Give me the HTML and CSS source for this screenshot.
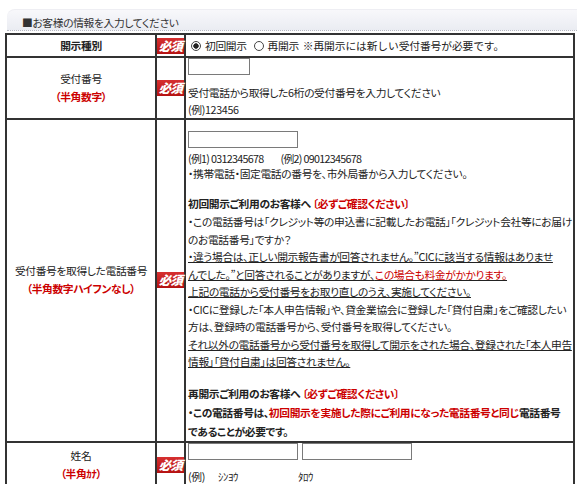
FILE: index.html
```html
<!DOCTYPE html>
<html lang="ja">
<head>
<meta charset="utf-8">
<title>お客様の情報</title>
<link rel="stylesheet" href="styles.css">
</head>
<body>
<div class="page">
  <div class="section-title">■お客様の情報を入力してください</div>
  <div class="form">
    <div class="cell label strong">開示種別</div>
    <div class="cell req"><span class="badge">必須</span></div>
    <div class="cell field field-r1">
      <label class="radio first"><input type="radio" name="kind" checked>初回開示</label><label class="radio"><input type="radio" name="kind">再開示</label><span class="memo">※再開示には新しい受付番号が必要です。</span>
    </div>

    <div class="cell label">受付番号<span class="note">（半角数字）</span></div>
    <div class="cell req"><span class="badge">必須</span></div>
    <div class="cell field">
      <input type="text" class="in-s">
      <div class="line first-line">受付電話から取得した6桁の受付番号を入力してください</div>
      <div class="line">(例)123456</div>
    </div>

    <div class="cell label">受付番号を取得した電話番号<span class="note">（半角数字ハイフンなし）</span></div>
    <div class="cell req"><span class="badge">必須</span></div>
    <div class="cell field">
      <input type="text" class="in-m top-gap">
      <div class="ex first-ex">(例1) 0312345678<span class="sp"></span>(例2) 09012345678</div>
      <div class="ex">・携帯電話・固定電話の番号を、市外局番から入力してください。</div>
      <div class="head">初回開示ご利用のお客様へ <span class="red">〔必ずご確認ください〕</span></div>
      <div class="body">・この電話番号は「クレジット等の申込書に記載したお電話」「クレジット会社等にお届け<br>のお電話番号」ですか？<br><span class="u">・違う場合は、正しい開示報告書が回答されません。”CICに該当する情報はありませ<br>んでした。”と回答されることがありますが、<span class="red">この場合も料金がかかります。</span><br>上記の電話から受付番号をお取り直しのうえ、実施してください。</span><br>・CICに登録した「本人申告情報」や、貸金業協会に登録した「貸付自粛」をご確認したい<br>方は、登録時の電話番号から、受付番号を取得してください。<br><span class="u">それ以外の電話番号から受付番号を取得して開示をされた場合、登録された「本人申告<br>情報」「貸付自粛」は回答されません。</span></div>
      <div class="head">再開示ご利用のお客様へ <span class="red">〔必ずご確認ください〕</span></div>
      <div class="body2">・この電話番号は、<span class="red">初回開示を実施した際にご利用になった電話番号と同じ</span>電話番号<br>であることが必要です。</div>
    </div>

    <div class="cell label">姓名<span class="note">（半角ｶﾅ）</span></div>
    <div class="cell req"><span class="badge">必須</span></div>
    <div class="cell field">
      <div class="name-inputs"><input type="text" class="in-m"><input type="text" class="in-m"></div>
      <div class="ex-name"><span class="ex-l">(例)</span><span class="ex-sei">ｼﾝﾖｳ</span><span>ﾀﾛｳ</span></div>
    </div>
  </div>
</div>
</body>
</html>
```

FILE: styles.css
```css
* { box-sizing: border-box; }
html, body { margin: 0; background: #fff; }
body {
  font-family: "Noto Sans CJK JP", "Noto Sans", sans-serif;
  font-size: 10.75px;
  color: #222;
  font-feature-settings: "palt";
  letter-spacing: -0.35px;
}
.page { padding-top: 9px; }

.section-title {
  margin-left: 7px;
  margin-bottom: 2px;
  height: 22px;
  padding: 4px 0 0 15px;
  line-height: 17px;
  color: #333;
  background: linear-gradient(#f8f8fb, #eaecf2);
  border-top-left-radius: 8px;
  border-top: 1px solid #eeeef3;
  border-bottom: 1px dotted #b5b7c0;
}

.form {
  margin-left: 5px;
  width: 570px;
  display: grid;
  grid-template-columns: 150px 29px 389px;
  border-top: 2px solid #333;
  border-left: 2px solid #333;
}
.cell {
  border-right: 2px solid #333;
  border-bottom: 2px solid #333;
  min-width: 0;
}

.label {
  display: flex;
  flex-direction: column;
  align-items: center;
  justify-content: center;
  text-align: center;
  line-height: 18px;
}
.label.strong { font-weight: bold; }
.note { color: #cc0000; font-weight: bold; }
.red { color: #cc0000; }

.req { display: flex; align-items: center; justify-content: center; }
.badge {
  display: block;
  width: 27px;
  height: 16px;
  line-height: 16px;
  background: linear-gradient(#d63030, #b51212);
  color: #fff;
  font-weight: 900;
  font-style: italic;
  font-size: 12.5px;
  letter-spacing: -0.8px;
  text-align: center;
  font-feature-settings: normal;
}

.field {
  padding: 0 0 0 2px;
  white-space: nowrap;
  overflow: hidden;
}
.field-r1 { display: flex; align-items: center; height: 23px; line-height: 21px; }

.radio { display: inline-flex; align-items: center; margin-right: 7px; }
.radio.first { margin-left: 3px; }
.radio input {
  appearance: none;
  -webkit-appearance: none;
  width: 10px;
  height: 10px;
  margin: 0 4px 0 0;
  border: 1px solid #444;
  border-radius: 50%;
  background: #fff;
}
.radio input:checked { background: radial-gradient(circle, #222 0 2.4px, #fff 3px); }
.memo { margin-left: -3px; font-feature-settings: normal; letter-spacing: -0.1px; }

input[type="text"] {
  display: block;
  height: 17px;
  margin: 0;
  padding: 0;
  border: 1px solid #7a7a7a;
  background: #fff;
}
.in-s { width: 62px; }
.in-m { width: 110px; }
.top-gap { margin-top: 11px !important; }

.line { line-height: 17px; }
.first-line { margin-top: 9px; }

.ex { line-height: 15px; }
.first-ex { margin-top: 3px; letter-spacing: -0.7px; }
.sp { display: inline-block; width: 17px; }

.head { margin-top: 13px; line-height: 19px; font-weight: bold; }
.body { line-height: 17.5px; }
.u { text-decoration: underline; }
.body2 { line-height: 19px; font-weight: bold; }

.name-inputs { display: flex; gap: 4px; }
.ex-name { margin-top: 8px; line-height: 17px; padding-bottom: 3px; }
.ex-l { display: inline-block; width: 30px; }
.ex-sei { display: inline-block; width: 80px; }
```
